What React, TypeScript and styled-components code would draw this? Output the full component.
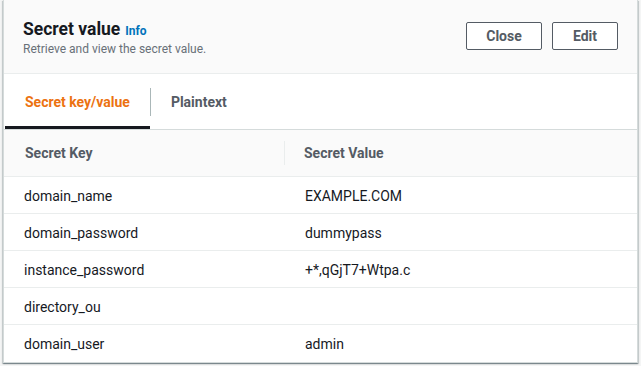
import { styled, createGlobalStyle } from "styled-components";

const GlobalStyle = createGlobalStyle`
  html, body {
    margin: 0;
    padding: 0;
    background: #f4f5f5;
    font-family: Roboto, "Liberation Sans", Arial, sans-serif;
    color: #16191f;
  }
`;

const rows = [
  { key: "domain_name", value: "EXAMPLE.COM" },
  { key: "domain_password", value: "dummypass" },
  { key: "instance_password", value: "+*,qGjT7+Wtpa.c" },
  { key: "directory_ou", value: "" },
  { key: "domain_user", value: "admin" },
];

const App = () => {
  return (
    <>
      <GlobalStyle />
      <Page>
        <Card>
          <Header>
            <TitleBlock>
              <TitleRow>
                <Title>Secret value</Title>
                <InfoLink>Info</InfoLink>
              </TitleRow>
              <Subtitle>Retrieve and view the secret value.</Subtitle>
            </TitleBlock>
            <Actions>
              <Button width={76}>Close</Button>
              <Button width={66}>Edit</Button>
            </Actions>
          </Header>
          <Tabs>
            <Tab active>Secret key/value</Tab>
            <TabDivider />
            <Tab>Plaintext</Tab>
          </Tabs>
          <Table>
            <HeadRow>
              <HeadCell>Secret Key</HeadCell>
              <HeadCell divider>Secret Value</HeadCell>
            </HeadRow>
            {rows.map((r) => (
              <Row key={r.key}>
                <Cell>{r.key}</Cell>
                <Cell>{r.value}</Cell>
              </Row>
            ))}
          </Table>
        </Card>
      </Page>
    </>
  );
};

export default App;

const Page = styled.div`
  padding: 0 4px 3px 3px;
`;

const Card = styled.div`
  width: 633px;
  background: #ffffff;
  border: 1px solid #d5dbdb;
  border-top: none;
  box-shadow: 0 1px 1px 0 rgba(0, 28, 36, 0.3), 1px 1px 1px 0 rgba(0, 28, 36, 0.15),
    -1px 1px 1px 0 rgba(0, 28, 36, 0.15);
`;

const Header = styled.div`
  height: 74px;
  box-sizing: border-box;
  background: #fafafa;
  border-bottom: 1px solid #eaeded;
  display: flex;
  justify-content: space-between;
  align-items: flex-start;
  padding: 18px 19px 0 19px;
`;

const TitleBlock = styled.div`
  display: flex;
  flex-direction: column;
`;

const TitleRow = styled.div`
  display: flex;
  align-items: baseline;
  gap: 5px;
`;

const Title = styled.div`
  font-size: 17.5px;
  font-weight: 700;
  line-height: 22px;
  color: #16191f;
`;

const InfoLink = styled.span`
  font-size: 12px;
  font-weight: 700;
  color: #0073bb;
`;

const Subtitle = styled.div`
  font-size: 12px;
  line-height: 16px;
  color: #687078;
  margin-top: 1px;
`;

const Actions = styled.div`
  display: flex;
  gap: 10px;
  margin-top: 4px;
`;

const Button = styled.button<{ width: number }>`
  width: ${(p) => p.width}px;
  height: 28px;
  box-sizing: border-box;
  background: #ffffff;
  border: 1px solid #545b64;
  border-radius: 2px;
  font-family: Roboto, "Liberation Sans", Arial, sans-serif;
  font-size: 14px;
  font-weight: 700;
  color: #545b64;
  padding: 0;
`;

const Tabs = styled.div`
  height: 56px;
  box-sizing: border-box;
  display: flex;
  align-items: center;
  padding-left: 1px;
  border-bottom: 1px solid #d5dbdb;
`;

const Tab = styled.div<{ active?: boolean }>`
  height: 100%;
  box-sizing: border-box;
  display: flex;
  align-items: center;
  padding: 4px 20px 0 20px;
  font-size: 14px;
  font-weight: 700;
  color: ${(p) => (p.active ? "#ec7211" : "#545b64")};
  border-bottom: 3px solid ${(p) => (p.active ? "#16191f" : "transparent")};
`;

const TabDivider = styled.div`
  width: 1px;
  height: 28px;
  margin-top: 1px;
  background: #aab7b8;
`;

const Table = styled.div`
  display: flex;
  flex-direction: column;
`;

const HeadRow = styled.div`
  height: 47px;
  box-sizing: border-box;
  display: grid;
  grid-template-columns: 280px 1fr;
  align-items: center;
  background: #fafafa;
  border-bottom: 1px solid #eaeded;
`;

const HeadCell = styled.div<{ divider?: boolean }>`
  height: 24px;
  display: flex;
  align-items: center;
  padding-left: ${(p) => (p.divider ? "19px" : "21px")};
  font-size: 14px;
  font-weight: 700;
  color: #545b64;
  border-left: ${(p) => (p.divider ? "1px solid #eaeded" : "none")};
`;

const Row = styled.div`
  height: 37px;
  box-sizing: border-box;
  display: grid;
  grid-template-columns: 281px 1fr;
  align-items: center;
  padding-top: 1px;
  border-bottom: 1px solid #eaeded;
  &:last-child {
    border-bottom: none;
  }
`;

const Cell = styled.div`
  padding-left: 20px;
  font-size: 14px;
  color: #16191f;
`;
